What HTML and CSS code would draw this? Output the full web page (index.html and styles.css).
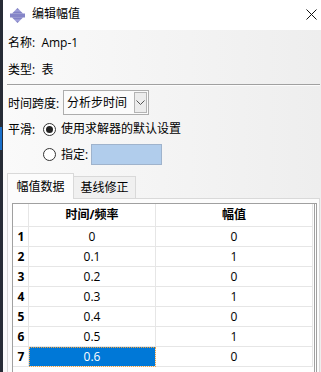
FILE: index.html
```html
<!DOCTYPE html>
<html lang="zh">
<head>
<meta charset="utf-8">
<link rel="stylesheet" href="styles.css">
</head>
<body>
<div class="screen">
  <div class="desk"><div class="desk-blue"></div></div>
  <div class="win">
    <div class="titlebar">
      <svg class="appicon" width="15" height="15" viewBox="0 0 15 15">
        <defs>
          <linearGradient id="ig" x1="0" y1="0" x2="0" y2="1">
            <stop offset="0" stop-color="#6f6fba"/>
            <stop offset="0.5" stop-color="#a4a4dc"/>
            <stop offset="1" stop-color="#6f6fba"/>
          </linearGradient>
        </defs>
        <polygon points="7.5,0 13,5.5 2,5.5" fill="url(#ig)"/>
        <rect x="0" y="5.5" width="15" height="4" fill="#8585c8"/>
        <polygon points="2,9.5 13,9.5 7.5,15" fill="url(#ig)"/>
      </svg>
      <span class="title">编辑幅值</span>
      <svg class="close" width="11" height="11" viewBox="0 0 11 11">
        <path d="M0.5 0.5 L10.5 10.5 M10.5 0.5 L0.5 10.5" stroke="#111" stroke-width="1" fill="none"/>
      </svg>
    </div>
    <div class="body">
      <div class="line name">名称:&nbsp; Amp-1</div>
      <div class="line type">类型:&nbsp; 表</div>
      <div class="sep"></div>
      <div class="row time">
        <span class="lbl lbl-time">时间跨度:</span>
        <div class="combo">
          <span class="combo-text">分析步时间</span>
          <span class="combo-btn">
            <svg width="9" height="6" viewBox="0 0 9 6"><path d="M0.5 0.5 L4.5 4.5 L8.5 0.5" stroke="#555" fill="none"/></svg>
          </span>
        </div>
      </div>
      <div class="row smooth">
        <span class="lbl lbl-smooth">平滑:</span>
        <span class="radio checked"></span>
        <span class="rtext">使用求解器的默认设置</span>
      </div>
      <div class="row spec">
        <span class="radio"></span>
        <span class="rtext">指定:</span>
        <span class="specbox"></span>
      </div>
      <div class="tabs">
        <div class="tab active">幅值数据</div>
        <div class="tab">基线修正</div>
      </div>
      <div class="panel">
        <div class="frame">
          <div class="grid">
            <div class="c hd"></div><div class="c hd b">时间/频率</div><div class="c hd b">幅值</div>
            <div class="c rn">1</div><div class="c">0</div><div class="c">0</div>
            <div class="c rn">2</div><div class="c">0.1</div><div class="c">1</div>
            <div class="c rn">3</div><div class="c">0.2</div><div class="c">0</div>
            <div class="c rn">4</div><div class="c">0.3</div><div class="c">1</div>
            <div class="c rn">5</div><div class="c">0.4</div><div class="c">0</div>
            <div class="c rn">6</div><div class="c">0.5</div><div class="c">1</div>
            <div class="c rn">7</div><div class="c sel">0.6</div><div class="c">0</div>
          </div>
        </div>
      </div>
    </div>
  </div>
</div>
</body>
</html>
```
FILE: styles.css
```css
* { box-sizing: border-box; }
html, body { margin: 0; padding: 0; }
body {
  width: 321px;
  height: 372px;
  overflow: hidden;
  font-family: "Open Sans", "Noto Sans CJK SC", sans-serif;
  font-size: 12px;
  color: #000;
}
.screen { display: flex; width: 321px; height: 372px; }
.desk { width: 3px; background: #272c36; position: relative; flex: none; }
.desk-blue { position: absolute; left: 0; top: 127px; width: 2px; height: 23px; background: #1a6fc9; }
.win { width: 318px; display: flex; flex-direction: column; height: 372px; }
.titlebar {
  height: 30px; background: #fff; display: flex; align-items: center;
  padding-left: 7px; flex: none;
}
.appicon { display: block; margin-top: 1px; }
.title { margin-left: 7px; line-height: 16px; margin-top: -2px; }
.close { margin-left: auto; margin-right: 4px; margin-top: -2px; display: block; }
.body {
  flex: 1; display: flex; flex-direction: column;
  background: linear-gradient(to right, #fafafa, #eeeeee);
  padding-left: 5px; overflow: hidden; min-height: 0;
}
.body > * { flex-shrink: 0; }
.line { height: 20px; line-height: 20px; white-space: pre; }
.name { margin-top: 3px; }
.type { margin-top: 7px; }
.sep { margin-top: 4px; margin-left: -1px; margin-right: 1px; height: 2px; border-top: 1px solid #a0a0a0; border-bottom: 1px solid #fcfcfc; }
.row { display: flex; align-items: center; }
.time { margin-top: 4px; height: 25px; }
.lbl-time { width: 55px; }
.combo {
  width: 86px; height: 25px; border: 1px solid #adadad; background: #fbfbfb;
  display: flex; align-items: center; padding-left: 3px;
}
.combo-text { flex: 1; line-height: 16px; }
.combo-btn {
  width: 13px; height: 21px; margin-right: 1px; border: 1px solid #b4b4b4; background: #ececec;
  display: flex; align-items: center; justify-content: center;
}
.combo-btn svg { display: block; margin-top: 1px; }
.smooth { margin-top: 2px; height: 24px; }
.lbl-smooth { width: 35px; }
.radio {
  width: 13px; height: 13px; border: 1px solid #333; border-radius: 50%; background: #fff;
  display: flex; align-items: center; justify-content: center; flex: none;
}
.radio.checked::after { content: ""; width: 7px; height: 7px; border-radius: 50%; background: #222; }
.rtext { margin-left: 5px; line-height: 16px; }
.spec { margin-top: 3px; height: 21px; padding-left: 35px; }
.specbox { margin-left: 3px; width: 71px; height: 21px; background: #b1cdec; border: 1px solid #9fb3cc; }
.tabs { margin-top: 8px; height: 25px; display: flex; align-items: flex-end; margin-left: -1px; position: relative; z-index: 1; }
.tab {
  height: 22px; width: 63px; padding: 0; text-align: center; line-height: 21px;
  border: 1px solid #d9d9d9; border-bottom: none; white-space: nowrap;
  background: #f0f0f0; margin-left: -1px;
}
.tab.active { height: 26px; width: 67px; margin-bottom: -1px; background: #fcfcfc; margin-left: 0; line-height: 25px; }
.panel {
  flex: 1 1 auto; min-height: 0; margin-left: -1px; margin-right: 1px; border: 1px solid #d9d9d9; border-bottom: none;
  background: #fcfcfc; padding: 4px 2px 0 4px; display: flex; flex-direction: column;
}
.frame { flex: 1; width: 305px; border: 1px solid #a0a0a0; border-bottom: none; padding-right: 1px; background: #fff; display: flex; }
.grid {
  display: grid; grid-template-columns: 16px 127px 157px; grid-auto-rows: 20px;
  grid-template-rows: 23px; padding-right: 1px; border-right: 1px solid #a0a0a0; width: 302px;
  align-content: start; flex: none;
}
.c {
  border-right: 1px solid #e6e6e6; border-bottom: 1px solid #e6e6e6;
  text-align: center; line-height: 19px; font-family: "Open Sans", sans-serif;
}
.hd { line-height: 22px; font-family: "Open Sans", "Noto Sans CJK SC", sans-serif; }
.b { font-weight: bold; }
.rn { font-weight: bold; padding-left: 1px; }
.sel { background: #0078d7; color: #fff; outline: 1px dotted #f4a340; outline-offset: -1px; }
```
